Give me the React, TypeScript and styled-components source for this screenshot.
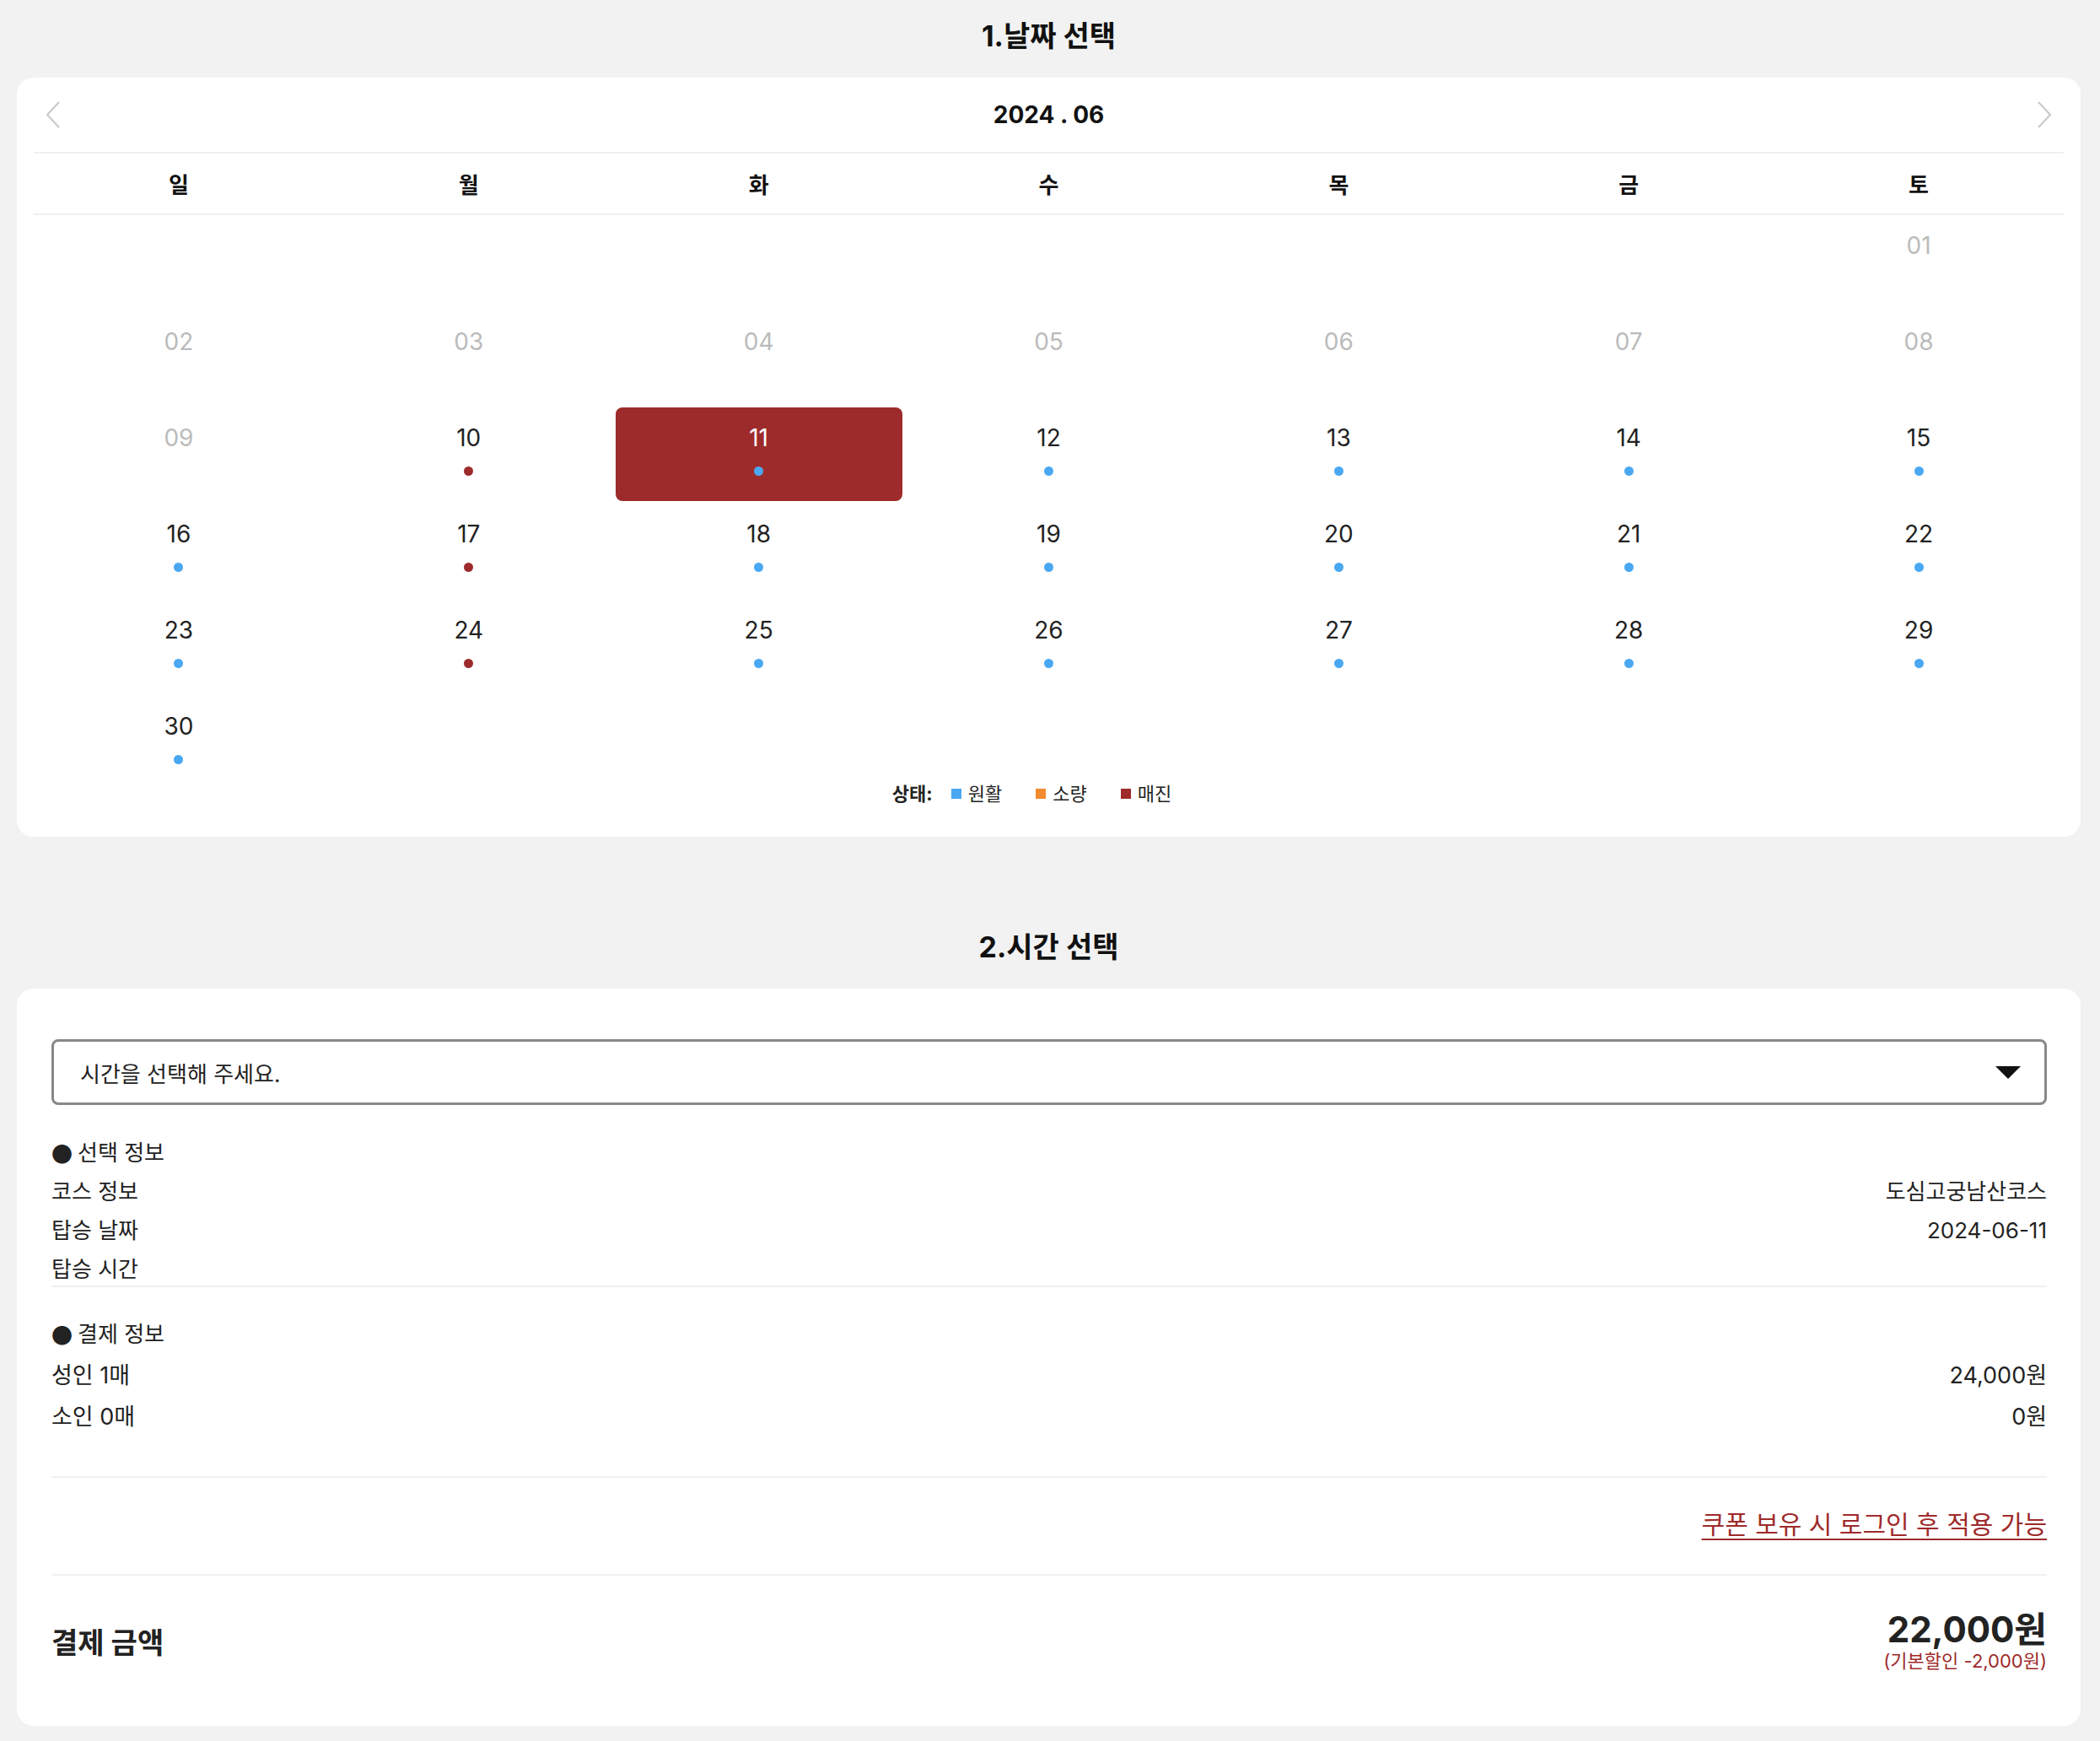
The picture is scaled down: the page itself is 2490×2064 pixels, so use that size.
import React from "react";
import styled, { createGlobalStyle } from "styled-components";

const GlobalStyle = createGlobalStyle`
  html, body {
    margin: 0;
    padding: 0;
    background: #f2f2f2;
  }
  body {
    font-family: Inter, "Noto Sans CJK KR", sans-serif;
    color: #222;
  }
  * {
    box-sizing: border-box;
  }
`;

const RED = "#9e2b2b";
const BLUE = "#4aa8f2";
const ORANGE = "#f28a30";

const Page = styled.main`
  padding: 0 23px 21px 20px;
`;

const SectionTitle = styled.h2<{ $first?: boolean }>`
  margin: ${p => (p.$first ? "0" : "109px")} 0 29px;
  padding-top: ${p => (p.$first ? "23px" : "2px")};
  font-size: 34px;
  font-weight: 700;
  line-height: 40px;
  text-align: center;
  color: #111;
`;

const Card = styled.section<{ $pad: string }>`
  background: #fff;
  border-radius: 20px;
  padding: ${p => p.$pad};
`;

const CalendarHeader = styled.div`
  display: flex;
  align-items: center;
  justify-content: space-between;
  height: 90px;
  padding: 0 12px;
  border-bottom: 2px solid #f0f0f0;
`;

const NavButton = styled.button`
  display: flex;
  align-items: center;
  justify-content: center;
  width: 22px;
  height: 32px;
  padding: 0;
  border: 0;
  background: none;
  cursor: pointer;
`;

const Month = styled.div`
  font-size: 28px;
  font-weight: 700;
  color: #111;
`;

const WeekRow = styled.div`
  display: grid;
  grid-template-columns: repeat(7, 1fr);
  align-items: center;
  height: 73px;
  border-bottom: 2px solid #f0f0f0;
  text-align: center;
  font-size: 26px;
  font-weight: 700;
  color: #111;
`;

const DayGrid = styled.div`
  display: grid;
  grid-template-columns: repeat(7, 1fr);
  grid-auto-rows: 111px;
  row-gap: 3px;
`;

type DayState = "past" | "open" | "selected";

const DayCell = styled.div<{ $state: DayState }>`
  display: flex;
  flex-direction: column;
  align-items: center;
  margin: 0 2px;
  padding-top: 19px;
  border-radius: 8px;
  font-size: 28px;
  line-height: 34px;
  background: ${p => (p.$state === "selected" ? RED : "transparent")};
  color: ${p =>
    p.$state === "past" ? "#bbb" : p.$state === "selected" ? "#fff" : "#222"};
  cursor: ${p => (p.$state === "past" ? "default" : "pointer")};
`;

const Dot = styled.span<{ $color: string }>`
  width: 11px;
  height: 11px;
  margin-top: 17px;
  border-radius: 50%;
  background: ${p => p.$color};
`;

const Legend = styled.div`
  display: flex;
  align-items: center;
  justify-content: center;
  margin-top: -8px;
  font-size: 22px;
  line-height: 26px;
  color: #222;
`;

const LegendLabel = styled.span`
  font-weight: 700;
  margin-right: 22px;
`;

const LegendItem = styled.span`
  display: flex;
  align-items: center;
  gap: 8px;
  margin-right: 40px;
`;

const Swatch = styled.span<{ $color: string }>`
  width: 12px;
  height: 12px;
  background: ${p => p.$color};
`;

const Select = styled.div`
  display: flex;
  align-items: center;
  justify-content: space-between;
  height: 78px;
  padding: 0 28px 0 31px;
  border: 3px solid #888;
  border-radius: 8px;
  font-size: 26px;
  color: #222;
  cursor: pointer;
`;

const InfoBlock = styled.div<{ $top: number; $gap: number; $size: number }>`
  display: flex;
  flex-direction: column;
  gap: ${p => p.$gap}px;
  margin-top: ${p => p.$top}px;
  font-size: ${p => p.$size}px;
  line-height: 30px;
`;

const InfoHeading = styled.div`
  display: flex;
  align-items: center;
  gap: 6px;
  font-size: 26px;
`;

const Bullet = styled.span`
  font-family: "Noto Sans CJK KR", sans-serif;
  font-size: 25px;
`;

const InfoRow = styled.div`
  display: flex;
  justify-content: space-between;
`;

const Divider = styled.hr<{ $top: number; $bottom?: number }>`
  height: 2px;
  margin: ${p => p.$top}px 0 ${p => p.$bottom ?? 0}px;
  border: 0;
  background: #f0f0f0;
`;

const CouponLink = styled.a`
  display: block;
  margin-top: 36px;
  font-size: 30px;
  line-height: 38px;
  text-align: right;
  color: ${RED};
  text-decoration: underline;
  text-decoration-thickness: 2px;
  text-underline-offset: 6px;
  cursor: pointer;
`;

const TotalRow = styled.div`
  display: flex;
  align-items: center;
  justify-content: space-between;
  margin-top: 40px;
`;

const TotalLabel = styled.div`
  font-size: 34px;
  font-weight: 700;
  color: #222;
`;

const TotalAmount = styled.div`
  display: flex;
  flex-direction: column;
  align-items: flex-end;
`;

const Price = styled.div`
  font-size: 42px;
  font-weight: 700;
  line-height: 48px;
  color: #222;
`;

const Discount = styled.div`
  font-size: 22px;
  line-height: 26px;
  color: ${RED};
`;

const Chevron = ({ dir }: { dir: "left" | "right" }) => (
  <svg width="20" height="32" viewBox="0 0 20 32">
    <polyline
      points={dir === "left" ? "17,1 3,16 17,31" : "3,1 17,16 3,31"}
      fill="none"
      stroke="#c8c8c8"
      strokeWidth="2"
    />
  </svg>
);

const weekdays = ["일", "월", "화", "수", "목", "금", "토"];
const soldOut = [10, 17, 24];
const selectedDay = 11;
const firstOpenDay = 10;

const App: React.FC = () => {
  const cells: (number | null)[] = [...Array(6).fill(null)];
  for (let d = 1; d <= 30; d++) cells.push(d);

  return (
    <>
      <GlobalStyle />
      <Page>
        <SectionTitle $first>1.날짜 선택</SectionTitle>
        <Card $pad="0 20px 38px">
          <CalendarHeader>
            <NavButton aria-label="이전 달">
              <Chevron dir="left" />
            </NavButton>
            <Month>2024 . 06</Month>
            <NavButton aria-label="다음 달">
              <Chevron dir="right" />
            </NavButton>
          </CalendarHeader>
          <WeekRow>
            {weekdays.map(w => (
              <div key={w}>{w}</div>
            ))}
          </WeekRow>
          <DayGrid>
            {cells.map((d, i) => {
              if (d === null) return <div key={`e${i}`} />;
              const state: DayState =
                d === selectedDay ? "selected" : d < firstOpenDay ? "past" : "open";
              return (
                <DayCell key={d} $state={state}>
                  {String(d).padStart(2, "0")}
                  {d >= firstOpenDay && (
                    <Dot $color={soldOut.includes(d) ? RED : BLUE} />
                  )}
                </DayCell>
              );
            })}
          </DayGrid>
          <Legend>
            <LegendLabel>상태:</LegendLabel>
            <LegendItem>
              <Swatch $color={BLUE} />
              원활
            </LegendItem>
            <LegendItem>
              <Swatch $color={ORANGE} />
              소량
            </LegendItem>
            <LegendItem>
              <Swatch $color={RED} />
              매진
            </LegendItem>
          </Legend>
        </Card>

        <SectionTitle>2.시간 선택</SectionTitle>
        <Card $pad="60px 40px 64px 41px">
          <Select>
            <span>시간을 선택해 주세요.</span>
            <svg width="30" height="15" viewBox="0 0 30 15">
              <polygon points="0,0 30,0 15,15" fill="#111" />
            </svg>
          </Select>

          <InfoBlock $top={42} $gap={16} $size={26}>
            <InfoHeading>
              <Bullet>●</Bullet>
              선택 정보
            </InfoHeading>
            <InfoRow>
              <span>코스 정보</span>
              <span>도심고궁남산코스</span>
            </InfoRow>
            <InfoRow>
              <span>탑승 날짜</span>
              <span>2024-06-11</span>
            </InfoRow>
            <InfoRow>
              <span>탑승 시간</span>
              <span />
            </InfoRow>
          </InfoBlock>
          <Divider $top={4} />

          <InfoBlock $top={41} $gap={19} $size={27}>
            <InfoHeading>
              <Bullet>●</Bullet>
              결제 정보
            </InfoHeading>
            <InfoRow>
              <span>성인 1매</span>
              <span>24,000원</span>
            </InfoRow>
            <InfoRow>
              <span>소인 0매</span>
              <span>0원</span>
            </InfoRow>
          </InfoBlock>
          <Divider $top={55} />

          <CouponLink>쿠폰 보유 시 로그인 후 적용 가능</CouponLink>
          <Divider $top={40} />

          <TotalRow>
            <TotalLabel>결제 금액</TotalLabel>
            <TotalAmount>
              <Price>22,000원</Price>
              <Discount>(기본할인 -2,000원)</Discount>
            </TotalAmount>
          </TotalRow>
        </Card>
      </Page>
    </>
  );
};

export default App;
